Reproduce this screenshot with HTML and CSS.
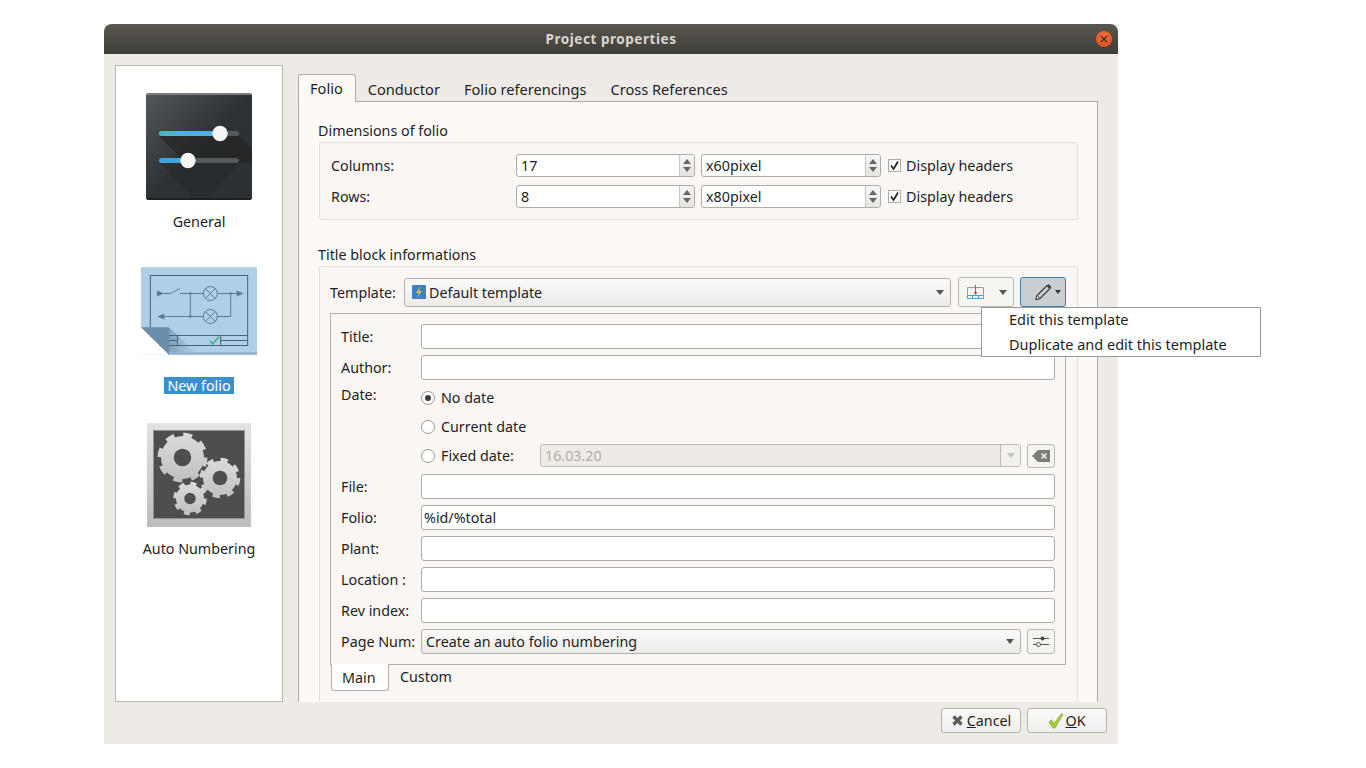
FILE: index.html
```html
<!DOCTYPE html>
<html lang="en">
<head>
<meta charset="utf-8">
<title>Project properties</title>
<link rel="stylesheet" href="styles.css">
</head>
<body>
<div class="window">
  <header class="titlebar">
    <span class="title">Project properties</span>
    <button class="close" aria-label="Close"><svg width="8" height="8" viewBox="0 0 8 8"><path d="M1 1l6 6M7 1l-6 6" stroke="#4a2412" stroke-width="1.2" fill="none"/></svg></button>
  </header>
  <div class="content">
    <nav class="sidebar">
      <div class="side-item side-general">
        <svg class="side-icon" width="108" height="108" viewBox="0 0 108 108">
          <defs>
            <linearGradient id="gbg" x1="0" y1="0" x2="1" y2="1"><stop offset="0" stop-color="#55585b"/><stop offset=".5" stop-color="#2f3234"/><stop offset="1" stop-color="#2c3033"/></linearGradient>
            <clipPath id="gclip"><rect x="1" y="0" width="106" height="107" rx="3"/></clipPath>
          </defs>
          <g clip-path="url(#gclip)">
            <rect x="1" y="0" width="106" height="107" fill="url(#gbg)"/>
            <rect x="1" y="0" width="106" height="2" fill="#7a7c7e"/>
            <rect x="1" y="105" width="106" height="2" fill="#1d1f21"/>
            <path d="M14 43H94L107 56V70H41z" fill="#1f2123" opacity=".6"/>
            <path d="M14 70H94L64 105H49z" fill="#1f2123" opacity=".3"/>
          </g>
          <rect x="14" y="38" width="80" height="5" rx="2.5" fill="#55585a"/>
          <rect x="14" y="38" width="62" height="5" rx="2.5" fill="#4fb0e6"/>
          <circle cx="75" cy="40.5" r="7.7" fill="#f4f4f4"/>
          <rect x="14" y="65" width="80" height="5" rx="2.5" fill="#55585a"/>
          <rect x="14" y="65" width="30" height="5" rx="2.5" fill="#3fa5df"/>
          <circle cx="43" cy="67.5" r="7.7" fill="#f4f4f4"/>
        </svg>
        <span class="side-label">General</span>
      </div>
      <div class="side-item side-folio">
        <svg class="side-icon" width="116" height="88" viewBox="111 36 348 263">
          <defs>
            <linearGradient id="fold" x1="0" y1="0" x2="1" y2="0"><stop offset="0" stop-color="#7fa3bd"/><stop offset="1" stop-color="#aecde3"/></linearGradient>
          </defs>
          <rect x="111" y="36" width="348" height="263" fill="#b0cfe6"/>
          <rect x="195" y="291" width="264" height="8" fill="#92b4cd"/>
          <path d="M195 216l78 75h-78z" fill="url(#fold)"/>
          <g stroke="#44627a" stroke-width="3" fill="none">
            <rect x="139" y="61" width="292" height="210"/>
            <path d="M139 241h292M195 256h25M350 256h81M220 241v30M350 241v30"/>
          </g>
          <g stroke="#5d7a90" stroke-width="3" fill="none">
            <path d="M178 115h22l28-15M228 115h70M340 115h62M180 184h118M340 184h40V115M259 115v69"/>
            <circle cx="319" cy="115" r="21"/><circle cx="319" cy="184" r="21"/>
            <path d="M304 100l30 30M334 100l-30 30M304 169l30 30M334 169l-30 30"/>
          </g>
          <g fill="#5d7a90">
            <path d="M159 106l21 9-21 9zM418 115l-20-9v18zM160 184l21-9v18z"/>
            <circle cx="259" cy="115" r="4"/><circle cx="259" cy="184" r="4"/><circle cx="380" cy="115" r="4"/>
          </g>
          <path d="M317 257l9 9 19-21" stroke="#3fae86" stroke-width="4.500" fill="none"/>
          <path d="M111 216v83h84z" fill="#fff"/>
          <path d="M111 216h84v83z" fill="#6a8ea9"/>
        </svg>
        <span class="side-label side-selected">New folio</span>
      </div>
      <div class="side-item side-auto">
        <svg class="side-icon" width="104" height="104" viewBox="0 0 104 104">
          <defs>
            <linearGradient id="abg" x1="0" y1="0" x2="0" y2="1"><stop offset="0" stop-color="#e2e3e4"/><stop offset="1" stop-color="#bbbcbb"/></linearGradient>
            <linearGradient id="gear" x1="0" y1="0" x2="0" y2="1"><stop offset="0" stop-color="#dadada"/><stop offset="1" stop-color="#c2c2c2"/></linearGradient>
          </defs>
          <rect width="104" height="104" fill="url(#abg)"/>
          <rect x="6.5" y="7.5" width="91" height="88" fill="#4e4e4e" stroke="#8f908f"/>
          <g fill="url(#gear)">
            <circle cx="35.5" cy="34.5" r="21.5"/>
            <circle cx="73" cy="55" r="17"/>
            <circle cx="43" cy="75.5" r="14"/>
          </g>
          <g fill="none" stroke="url(#gear)">
            <circle cx="35.5" cy="34.5" r="21.5" stroke-width="7" stroke-dasharray="8.4 8.5"/>
            <circle cx="73" cy="55" r="17.5" stroke-width="5.5" stroke-dasharray="6.9 6.85"/>
            <circle cx="43" cy="75.5" r="14.5" stroke-width="4.5" stroke-dasharray="5.7 5.68"/>
          </g>
          <g fill="#4e4e4e">
            <circle cx="35.5" cy="34.5" r="8.7"/>
            <circle cx="73" cy="55" r="7.3"/>
            <circle cx="43" cy="75.5" r="5.7"/>
          </g>
        </svg>
        <span class="side-label">Auto Numbering</span>
      </div>
    </nav>

    <section class="tabs">
      <div class="tabbar">
        <span class="tab tab-active">Folio</span>
        <span class="tab">Conductor</span>
        <span class="tab">Folio referencings</span>
        <span class="tab">Cross References</span>
      </div>
      <div class="pane">
        <h3 class="group-title">Dimensions of folio</h3>
        <div class="group group-dim">
          <span>Columns:</span>
          <div class="field spin"><span class="spin-text">17</span><span class="spin-btns"><i class="up"></i><i class="down"></i></span></div>
          <div class="field spin"><span class="spin-text">x60pixel</span><span class="spin-btns"><i class="up"></i><i class="down"></i></span></div>
          <label class="check"><span class="box"><svg width="11" height="11" viewBox="0 0 11 11"><path d="M2 5.5l2.6 3.5L9 1.5" stroke="#222" stroke-width="1.7" fill="none"/></svg></span>Display headers</label>
          <span>Rows:</span>
          <div class="field spin"><span class="spin-text">8</span><span class="spin-btns"><i class="up"></i><i class="down"></i></span></div>
          <div class="field spin"><span class="spin-text">x80pixel</span><span class="spin-btns"><i class="up"></i><i class="down"></i></span></div>
          <label class="check"><span class="box"><svg width="11" height="11" viewBox="0 0 11 11"><path d="M2 5.5l2.6 3.5L9 1.5" stroke="#222" stroke-width="1.7" fill="none"/></svg></span>Display headers</label>
        </div>

        <h3 class="group-title group-title-2">Title block informations</h3>
        <div class="group group-title-block">
          <div class="template-row">
            <span class="template-label">Template:</span>
            <div class="combo combo-template">
              <svg class="tpl-icon" width="16" height="16" viewBox="0 0 16 16"><rect x="1" y="1" width="14" height="14" rx="1" fill="#3f7fc4"/><path d="M9.5 2L5 9h3l-2 5 5-7H8z" fill="#eec23a"/></svg>
              <span class="combo-text">Default template</span><i class="arrow"></i>
            </div>
            <div class="tool-btn tool-insert">
              <svg width="17" height="15" viewBox="0 0 17 15"><path d="M.5 10.500V2.500h16v8" stroke="#9a9a9a" fill="none"/><path d="M.5 10.500h16v3H.5zM5.500 10.500v3M11.500 10.500v3" stroke="#35a9e6" fill="none"/><path d="M8.500 0v8" stroke="#d8405a" fill="none"/><path d="M6.500 7h4L8.500 10z" fill="#d8405a"/></svg>
              <i class="arrow"></i>
            </div>
            <div class="tool-btn tool-edit">
              <svg width="18" height="18" viewBox="0 0 18 18"><path d="M2 12.500L12 2.500l3 3-10 10-4 1z" fill="none" stroke="#3c3c3c" stroke-width="1.200"/><path d="M12 2.500l1.500-1.500 3 3L15 5.500z" fill="#3c3c3c"/><path d="M1 16.500l1-4 3 3z" fill="#fff" stroke="#3c3c3c"/></svg>
              <i class="arrow arrow-edit"></i>
            </div>
          </div>

          <div class="form-frame">
            <div class="form">
              <span>Title:</span><div class="field"></div>
              <span>Author:</span><div class="field"></div>
              <span class="date-label">Date:</span>
              <div class="date-options">
                <label class="radio-row"><span class="radio radio-on"></span>No date</label>
                <label class="radio-row"><span class="radio"></span>Current date</label>
                <div class="radio-row fixed-row">
                  <span class="radio"></span><span class="fixed-label">Fixed date:</span>
                  <div class="date-field"><span class="date-text">16.03.20</span><span class="date-drop"><i class="arrow arrow-off"></i></span></div>
                  <div class="square-btn square-clear"><svg width="18" height="12" viewBox="0 0 18 12"><path d="M6 0h12v12H6L0 6z" fill="#7d7d7b"/><path d="M9.500 3.500l5 5M14.500 3.500l-5 5" stroke="#eee" stroke-width="1.600"/></svg></div>
                </div>
              </div>
              <span>File:</span><div class="field"></div>
              <span>Folio:</span><div class="field field-pad">%id/%total</div>
              <span>Plant:</span><div class="field"></div>
              <span>Location :</span><div class="field"></div>
              <span>Rev index:</span><div class="field"></div>
              <span>Page Num:</span>
              <div class="page-row">
                <div class="combo combo-page"><span class="combo-text">Create an auto folio numbering</span><i class="arrow"></i></div>
                <div class="square-btn"><svg width="18" height="13" viewBox="0 0 18 13"><path d="M1 3.500h16M1 9.500h16" stroke="#555" fill="none"/><circle cx="10.500" cy="3.500" r="2" fill="#444"/><circle cx="6.500" cy="9.500" r="2" fill="#f4f2ee" stroke="#555"/></svg></div>
              </div>
            </div>
          </div>
          <div class="subtabs">
            <span class="subtab subtab-active">Main</span>
            <span class="subtab">Custom</span>
          </div>
        </div>
      </div>
    </section>
  </div>
  <footer class="footer">
    <button class="btn"><svg width="13" height="13" viewBox="0 0 13 13"><path d="M2.500 2.500l8 8M10.500 2.500l-8 8" stroke="#5d5d5d" stroke-width="3.400" fill="none"/></svg><span><u>C</u>ancel</span></button>
    <button class="btn btn-ok"><svg width="16" height="16" viewBox="0 0 16 16"><path d="M1 9l2.500-2 2.500 3.500L13.500 0.500l1.500 1L7 15H5z" fill="#a3cd3b" stroke="#7fa62b" stroke-width=".7"/></svg><span><u>O</u>K</span></button>
  </footer>
</div>
<div class="menu">
  <div class="menu-item">Edit this template</div>
  <div class="menu-item">Duplicate and edit this template</div>
</div>
</body>
</html>
```
FILE: styles.css
```css
* { box-sizing: border-box; }
html, body { margin: 0; height: 768px; overflow: hidden; background: #fff; }
body {
  position: relative;
  padding: 24px 0 0 104px;
  font: 14.3px/18px "Noto Sans", "Open Sans", sans-serif;
  color: #1e1e1e;
}
h3 { margin: 0; font: inherit; }
i { display: block; }
svg { display: block; flex: none; }
.window { width: 1014px; height: 720px; background: #eeebe7; display: flex; flex-direction: column; }
.titlebar {
  height: 30px; flex: none; border-radius: 8px 8px 0 0;
  background: linear-gradient(#5a5750, #3f3d38);
  display: flex; align-items: center; justify-content: center; position: relative;
}
.title { color: #d9d6d0; font-weight: 700; font-size: 13.5px; letter-spacing: .55px; }
.close {
  position: absolute; right: 6px; top: 7px; width: 16px; height: 16px; padding: 0; border: 0;
  border-radius: 50%; background: radial-gradient(circle at 50% 30%, #f0703c, #d84f20);
  display: flex; align-items: center; justify-content: center;
}
.content { height: 648px; flex: none; display: flex; padding: 11px 0 0 11px; }
.sidebar { width: 168px; height: 637px; background: #fff; border: 1px solid #b9b6af; display: flex; flex-direction: column; align-items: center; }
.side-item { display: flex; flex-direction: column; align-items: center; width: 100%; }
.side-general { padding-top: 27px; }
.side-general .side-label { margin-top: 12px; }
.side-folio { padding-top: 36px; }
.side-folio .side-label { margin-top: 22px; }
.side-auto { padding-top: 29px; }
.side-auto .side-label { margin-top: 13px; }
.side-label { line-height: 18px; }
.side-selected { background: #3a8fcd; color: #fff; padding: 0 3.500px; line-height: 17px; }
.tabs { width: 800px; margin-left: 15px; height: 637px; display: flex; flex-direction: column; }
.tabbar { height: 36px; flex: none; display: flex; align-items: flex-end; position: relative; z-index: 1; font-size: 14.6px; }
.tab { height: 27px; padding: 6px 12px 0; line-height: 18px; }
.tab-active { background: #fcf9f6; border: 1px solid #b0aea8; border-bottom: 0; border-radius: 3px 3px 0 0; height: 28px; padding: 4px 12px 0 11px; margin: 0 0 -1px 0; }
.pane { flex: 1; min-height: 0; overflow: hidden; background: #fcf9f6; border: 1px solid #adaba5; border-bottom: 0; padding: 19px 19px 0 20px; }
.group-title { line-height: 20px; margin-left: -1px; margin-bottom: 1px; }
.group-title-2 { margin-top: 25px; margin-bottom: 1px; }
.group { background: #f9f6f3; border: 1px solid #e3e0dc; border-radius: 2px; }
.group-dim {
  height: 78px; padding: 11px 0 0 11px;
  display: grid; grid-template-columns: 179px 179px 180px auto; grid-auto-rows: 23px; gap: 8px 6px; align-items: center;
}
.field { height: 25px; background: #fff; border: 1px solid #aeaca6; border-radius: 3px; line-height: 23px; }
.field-pad { padding-left: 2px; }
.spin { height: 23px; display: flex; }
.spin-text { flex: 1; padding-left: 4px; line-height: 21px; }
.spin-btns { width: 15px; border-left: 1px solid #c8c6c0; background: linear-gradient(#f7f6f4, #e6e4e0); border-radius: 0 3px 3px 0; display: flex; flex-direction: column; align-items: center; justify-content: center; gap: 3px; }
.up { width: 0; height: 0; border: 4px solid transparent; border-top: 0; border-bottom: 5px solid #666; }
.down { width: 0; height: 0; border: 4px solid transparent; border-bottom: 0; border-top: 5px solid #666; }
.check { display: flex; align-items: center; gap: 5px; margin-left: 1px; }
.box { width: 13px; height: 13px; background: #fff; border: 1px solid #aeaca6; display: flex; align-items: center; justify-content: center; }
.group-title-block { height: 500px; padding: 10px 11px 0 10px; }
.template-row { display: flex; align-items: center; height: 30px; }
.template-label { width: 74px; flex: none; padding-top: 2px; }
.combo { height: 29px; background: linear-gradient(#fbfaf9, #ecebe8); border: 1px solid #b4b2ac; border-radius: 3px; display: flex; align-items: center; }
.combo-template { width: 547px; padding: 0 6px 0 6px; gap: 2px; }
.combo-template .combo-text { padding-top: 2px; }
.combo-page { width: 600px; height: 25px; padding: 0 6px 0 4px; }
.combo-text { flex: 1; }
.arrow { width: 0; height: 0; border: 4.5px solid transparent; border-bottom: 0; border-top: 5px solid #555; }
.arrow-off { border-top-color: #c4c3bf; }
.tool-btn { height: 30px; border: 1px solid #b9b7b1; border-radius: 3px; background: #f7f5f2; display: flex; align-items: center; flex: none; }
.tool-insert { width: 56px; margin-left: 7px; padding: 0 6px 0 8px; justify-content: space-between; }
.tool-edit { width: 46px; margin-left: 6px; padding: 0 4px 0 14px; background: #c8ced2; border-color: #3f7ea6; justify-content: space-between; }
.arrow-edit { border-width: 3.500px; border-bottom: 0; border-top: 4px solid #333; }
.form-frame { margin-top: 6px; border: 1px solid #b2b0aa; padding: 10px 10px 10px; }
.form { display: grid; grid-template-columns: 80px 634px; gap: 6px 0; align-items: center; }
.date-label { align-self: start; }
.date-options { height: 82px; display: flex; flex-direction: column; gap: 6px; }
.radio-row { height: 23px; display: flex; align-items: center; gap: 6px; }
.radio { width: 14px; height: 14px; border-radius: 50%; border: 1px solid #9a9892; background: #fff; flex: none; display: flex; align-items: center; justify-content: center; }
.radio-on::after { content: ""; width: 6px; height: 6px; border-radius: 50%; background: #3c3c3c; }
.fixed-label { width: 93px; flex: none; }
.date-field { width: 481px; height: 23px; background: #eeebe7; border: 1px solid #bdbbb5; border-radius: 3px; display: flex; color: #aeaca8; line-height: 21px; flex: none; }
.date-text { flex: 1; padding-left: 4px; border-right: 1px solid #bdbbb5; }
.date-drop { width: 19px; background: #f3f1ee; display: flex; align-items: center; justify-content: center; }
.square-btn { width: 28px; height: 25px; border: 1px solid #b9b7b1; border-radius: 3px; background: #f6f4f1; display: flex; align-items: center; justify-content: center; flex: none; }
.square-clear { height: 24px; }
.page-row { display: flex; gap: 6px; }
.subtabs { display: flex; margin-top: -1px; position: relative; }
.subtab { height: 27px; padding: 4px 11px 0; }
.subtab-active { width: 58px; margin-left: 1px; background: #fff; border: 1px solid #b2b0aa; border-top: 0; border-radius: 0 0 3px 3px; padding: 5px 0 0 10px; }
.footer { flex: 1; display: flex; justify-content: flex-end; gap: 6px; padding: 6px 11px 0 0; position: relative; background: #eeebe7; }
.btn { width: 80px; height: 25px; padding: 0; border: 1px solid #b4b2ac; border-radius: 3px; background: linear-gradient(#fbfaf9, #f0eeeb); font: inherit; color: inherit; display: flex; align-items: center; justify-content: center; gap: 3px; }
.btn-ok { gap: 1px; }
.menu {
  position: absolute; left: 981px; top: 307px; width: 280px; height: 50px; background: #fff;
  border: 1px solid #999; padding: 0 0 0 27px; font-size: 14.5px;
}
.menu-item { height: 25px; line-height: 23px; }
```
